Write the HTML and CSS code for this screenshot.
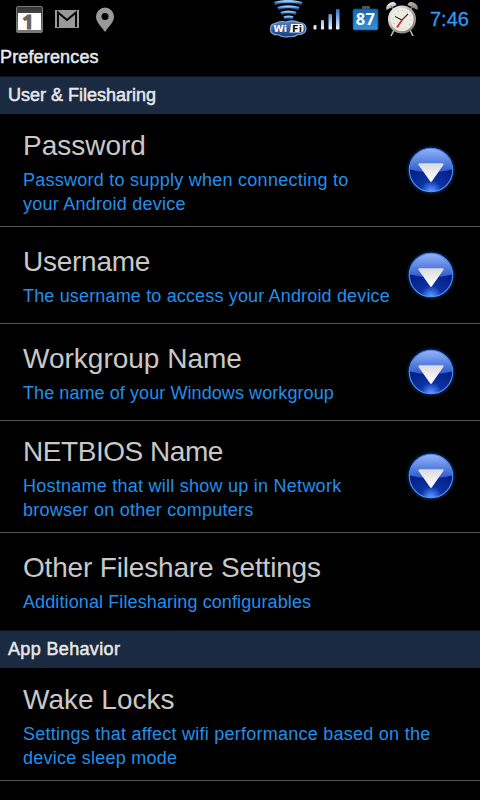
FILE: index.html
```html
<!DOCTYPE html>
<html lang="en">
<head>
<meta charset="utf-8">
<title>Preferences</title>
<link rel="stylesheet" href="styles.css">
</head>
<body>
<svg class="defs" width="0" height="0" aria-hidden="true">
  <defs>
    <linearGradient id="orbTop" x1="0" y1="0" x2="0" y2="1"><stop offset="0" stop-color="#94b5fa"/><stop offset="1" stop-color="#2e5bcf"/></linearGradient>
    <radialGradient id="orbBase" cx=".5" cy="1" r=".75"><stop offset="0" stop-color="#6ba0ff"/><stop offset=".15" stop-color="#3b6fe4"/><stop offset=".34" stop-color="#0c32a4"/><stop offset="1" stop-color="#03187c"/></radialGradient>
    <linearGradient id="orbRim" x1="0" y1="0" x2="0" y2="1"><stop offset="0" stop-color="#4c7fe2"/><stop offset="1" stop-color="#49a2fa"/></linearGradient>
    <radialGradient id="glow"><stop offset=".78" stop-color="#1160d8" stop-opacity=".6"/><stop offset="1" stop-color="#0848b0" stop-opacity="0"/></radialGradient>
    <linearGradient id="arrow" x1="0" y1="0" x2="0" y2="1"><stop offset="0" stop-color="#dcdcdc"/><stop offset="1" stop-color="#fff"/></linearGradient>
    <linearGradient id="bar" gradientUnits="userSpaceOnUse" x1="0" y1="9" x2="0" y2="30"><stop offset="0" stop-color="#2674c8"/><stop offset="1" stop-color="#f5fbff"/></linearGradient>
    <linearGradient id="wave" x1="0" y1="0" x2="0" y2="1"><stop offset="0" stop-color="#8fc5f2"/><stop offset="1" stop-color="#1c5cae"/></linearGradient>
    <linearGradient id="batt" x1="0" y1="0" x2="0" y2="1"><stop offset="0" stop-color="#1767ad"/><stop offset="1" stop-color="#3793dc"/></linearGradient>
    <linearGradient id="cal" x1="0" y1="0" x2="0" y2="1"><stop offset="0" stop-color="#333"/><stop offset="1" stop-color="#777"/></linearGradient>
    <linearGradient id="metal" x1="0" y1="0" x2="1" y2="1"><stop offset="0" stop-color="#fff"/><stop offset=".5" stop-color="#aaa"/><stop offset="1" stop-color="#777"/></linearGradient>
    <linearGradient id="cloud" x1="0" y1="0" x2="0" y2="1"><stop offset="0" stop-color="#5183c4"/><stop offset="1" stop-color="#123e80"/></linearGradient>
    <symbol id="orb" viewBox="0 0 52 52">
      <circle cx="26" cy="26" r="25.5" fill="url(#glow)"/>
      <circle cx="26" cy="26" r="21.6" fill="url(#orbBase)"/>
      <path d="M4.5 25.5a21.5 21.5 0 0 1 43 0Q37 28 26 28T4.500 25.500Z" fill="url(#orbTop)"/>
      <circle cx="26" cy="26" r="21.700" fill="none" stroke="url(#orbRim)" stroke-width="1.100"/>
      <path d="M14.500 20.300h23L26 36.500Z" fill="url(#arrow)" stroke="url(#arrow)" stroke-width="2.200" stroke-linejoin="round"/>
    </symbol>
  </defs>
</svg>
<header class="status">
  <svg class="status-icons" width="420" height="38" viewBox="0 0 420 38">
    <g>
      <rect x="16.500" y="6.500" width="26" height="26" rx="1.500" fill="url(#cal)" stroke="#777"/>
      <path d="M18 13h23v17H18z" fill="#fff"/>
      <path d="M17 30.500h25v2H17z" fill="#777"/>
      <text x="28" y="28.500" class="cal-day">1</text>
    </g>
    <g>
      <rect x="55" y="10" width="24" height="18" fill="#999"/>
      <path d="M58 27V12.500l9 7.500 9-7.500V27" fill="none" stroke="#080808" stroke-width="2"/>
    </g>
    <path fill-rule="evenodd" fill="#999" d="M105 7.500a9 9 0 0 0-9 9c0 6 5.500 10 9 15.500 3.500-5.500 9-9.500 9-15.500a9 9 0 0 0-9-9Zm0 5.500a3.500 3.500 0 1 1 0 7 3.500 3.500 0 0 1 0-7Z"/>
    <g fill="none" stroke="url(#wave)" stroke-width="3.200">
      <path d="M274.500 3.500Q288-.500 302 3.500"/>
      <path d="M278 8.500Q288 5 299 8.500"/>
      <path d="M281 13.500Q288 10.500 296 13.500"/>
      <path d="M284 18Q288.500 16 293 18"/>
    </g>
    <g>
      <path d="M275 23.500q5-3 11-1.500 7-2.500 13 .5 7 .5 7 6 0 6-8 6-4 3-9 2-6 1.500-10-1.500-9 0-8.500-6 0-5 4.500-5.500Z" fill="url(#cloud)" stroke="#8da9ce" stroke-width="1.200"/>
      <path d="M291 24h10q2.500 0 2.500 2.500v3q0 3-3 3h-11.500q1.500-1 1.500-4Z" fill="#fff"/>
      <text x="273.500" y="31.500" class="wifi-word" textLength="13.500" lengthAdjust="spacingAndGlyphs">Wi</text>
      <text x="292" y="31.500" class="wifi-word dark" textLength="10" lengthAdjust="spacingAndGlyphs">Fi</text>
    </g>
    <g fill="url(#bar)">
      <rect x="313.500" y="25" width="3" height="4.500" rx="1"/>
      <rect x="321" y="20" width="3" height="9.500" rx="1"/>
      <rect x="328.500" y="14" width="3.500" height="15.500" rx="1"/>
      <rect x="336" y="9" width="3.500" height="20.500" rx="1"/>
    </g>
    <g>
      <path d="M362 9V7q0-1 1-1h6q1 0 1 1v2Z" fill="#555"/>
      <rect x="353" y="9" width="25" height="21" rx="1.500" fill="url(#batt)" stroke="#104b82" stroke-width=".8"/>
      <text x="365.500" y="25" class="battery">87</text>
    </g>
    <g>
      <path d="m394 30-3 6M410 30l3 6" stroke="#bbb" stroke-width="1.600"/>
      <path d="M386.500 10q-1.500-5 4-7.500 5-1.500 6 2.500ZM417.500 10q1.500-5-4-7.500-5-1.500-6 2.500Z" fill="url(#metal)"/>
      <path d="m391 6 3 4M413 6l-3 4" stroke="#777" stroke-width="1.500"/>
      <circle cx="402" cy="19.500" r="12.800" fill="#efede2" stroke="url(#metal)" stroke-width="2.500"/>
      <circle cx="402" cy="19.500" r="9" fill="none" stroke="#aaa89c" stroke-width="1" stroke-dasharray="1 3.712"/>
      <path d="m395 16.500 7 3.500 6-6" fill="none" stroke="#333" stroke-width="1.200"/>
      <path d="m402 20-5 7.500" stroke="#e32b20" stroke-width="1.800"/>
    </g>
  </svg>
  <span class="clock">7:46</span>
</header>
<h1 class="page-title">Preferences</h1>
<main>
  <h2 class="section">User &amp; Filesharing</h2>
  <div class="item tall first password"><div class="copy"><div class="name">Password</div><div class="summary">Password to supply when connecting to<br>your Android device</div></div><svg class="orb"><use href="#orb"/></svg></div>
  <div class="item username"><div class="copy"><div class="name">Username</div><div class="summary">The username to access your Android device</div></div><svg class="orb"><use href="#orb"/></svg></div>
  <div class="item workgroup"><div class="copy"><div class="name">Workgroup Name</div><div class="summary">The name of your Windows workgroup</div></div><svg class="orb"><use href="#orb"/></svg></div>
  <div class="item tall netbios"><div class="copy"><div class="name">NETBIOS Name</div><div class="summary">Hostname that will show up in Network<br>browser on other computers</div></div><svg class="orb"><use href="#orb"/></svg></div>
  <div class="item last other"><div class="copy"><div class="name">Other Fileshare Settings</div><div class="summary">Additional Filesharing configurables</div></div></div>
  <h2 class="section behavior">App Behavior</h2>
  <div class="item tall first wake"><div class="copy"><div class="name">Wake Locks</div><div class="summary">Settings that affect wifi performance based on the<br>device sleep mode</div></div></div>
</main>
</body>
</html>
```
FILE: styles.css
```css
* { box-sizing: border-box; }
body {
  margin: 0;
  height: 800px;
  overflow: hidden;
  background: #000;
  font-family: "Liberation Sans", Arial, sans-serif;
}
.defs { position: absolute; }
.status { display: flex; height: 38px; }
.status-icons { flex: none; }
.clock {
  padding-left: 10px;
  font-size: 20px;
  line-height: 38px;
  color: #2e9bf5;
  -webkit-text-stroke: .3px #2e9bf5;
}
.cal-day {
  font: bold 20px "Liberation Sans", Arial, sans-serif;
  font-family: "Open Sans", sans-serif;
  text-anchor: middle;
  fill: #666;
  stroke: #666;
  stroke-width: 1.2px;
}
.wifi-word { font: bold 9.5px "DejaVu Sans", sans-serif; fill: #fff; }
.wifi-word.dark { fill: #111; }
.battery {
  font: bold 16.5px "Open Sans", sans-serif;
  text-anchor: middle;
  letter-spacing: .3px;
  fill: #fff;
}
.page-title, .section {
  margin: 0;
  height: 38px;
  font-size: 18px;
  font-weight: 400;
  line-height: 38px;
  color: #e8e8e8;
  -webkit-text-stroke: .5px #e8e8e8;
}
.page-title { letter-spacing: .15px; }
.section {
  padding-left: 8px;
  background: #1a2a40;
  border-top: 1px solid #0d1520;
  line-height: 36px;
}
.section.behavior { letter-spacing: .35px; }
.item {
  display: flex;
  align-items: center;
  justify-content: space-between;
  height: 97px;
  padding: 0 23px;
  border-bottom: 1px solid #555;
}
.item.tall { height: 112px; }
.item.tall.first { height: 113px; }
.item.last { border-bottom-color: transparent; }
.item.netbios { padding-bottom: 1px; }
.copy { padding-top: 3px; white-space: nowrap; }
.first .copy { padding-top: 5px; }
.netbios .copy { padding-top: 4px; }
.name {
  margin-bottom: 5px;
  font-size: 28px;
  line-height: 34px;
  color: #c8c8c8;
}
.summary {
  font-size: 18px;
  line-height: 24px;
  letter-spacing: .25px;
  color: #2090ec;
}
.username .name { letter-spacing: -.25px; }
.netbios .name { letter-spacing: -.45px; }
.other .name { letter-spacing: -.17px; }
.username .summary { letter-spacing: .16px; }
.workgroup .summary { letter-spacing: .08px; }
.other .summary { letter-spacing: .11px; }
.orb { flex: none; width: 52px; height: 52px; }
```
